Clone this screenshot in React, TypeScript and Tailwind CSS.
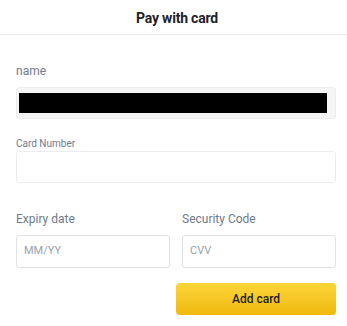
export default function App() {
  return (
    <div className="w-[347px] h-[326px] bg-white text-[#1e2329]" style={{ fontFamily: 'Roboto, "Noto Sans", sans-serif' }}>
      <div className="h-[35px] border-b border-[#eaecef] flex items-center justify-center pl-[7px] pt-[1px]">
        <span className="text-[14px] font-bold leading-5 tracking-[-0.2px]">Pay with card</span>
      </div>
      <div className="w-[336px] pl-4">
        <div className="mt-[28px] text-[12px] leading-4 text-[#707a8a]">name</div>
        <div className="mt-2 h-[32px] rounded-[3px] border border-[#eaecef] bg-[#f5f5f5] flex items-center pl-[2px] pr-[8px]">
          <div className="h-[20px] w-full bg-black" />
        </div>
        <div className="mt-[18px] text-[10px] leading-[14px] text-[#707a8a]">Card Number</div>
        <div className="h-[32px] rounded-[3px] border border-[#eaecef] bg-white" />
        <div className="mt-[28px] grid grid-cols-2 gap-3">
          <div>
            <div className="text-[12px] leading-4 text-[#707a8a]">Expiry date</div>
            <div className="mt-2 h-[33px] rounded-[3px] border border-[#dfe1e4] flex items-center px-[7px] text-[11px] text-[#9aa1ab]">MM/YY</div>
          </div>
          <div>
            <div className="text-[12px] leading-4 text-[#707a8a]">Security Code</div>
            <div className="mt-2 h-[33px] rounded-[3px] border border-[#dfe1e4] flex items-center px-[7px] text-[11px] text-[#9aa1ab]">CVV</div>
          </div>
        </div>
        <div className="mt-[15px] flex justify-end">
          <button className="w-[160px] h-[32px] rounded-[4px] bg-gradient-to-b from-[#fcd535] to-[#f0b90b] text-[12px] font-medium text-[#1e2329]">Add card</button>
        </div>
      </div>
    </div>
  );
}
